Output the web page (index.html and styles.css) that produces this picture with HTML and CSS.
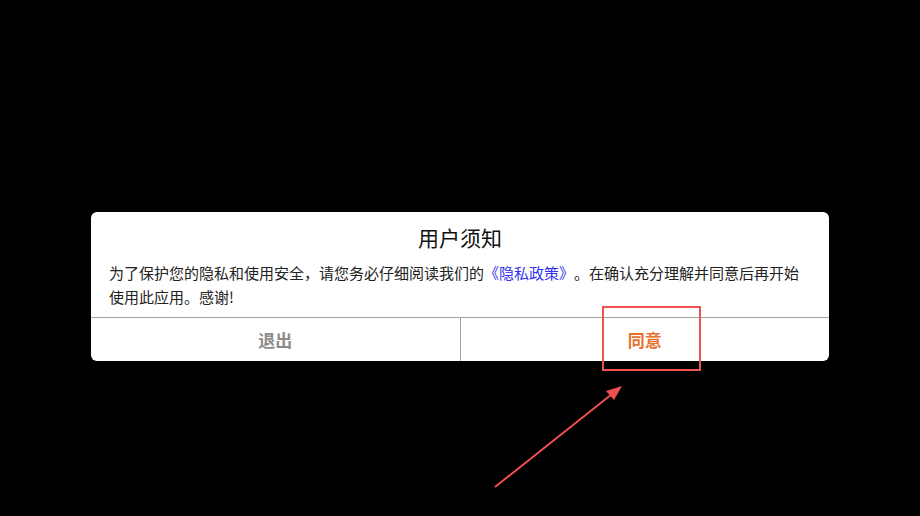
FILE: index.html
```html
<!DOCTYPE html>
<html lang="zh-CN">
<head>
    <meta charset="UTF-8">
    <meta name="viewport" content="width=device-width, initial-scale=1.0">
    <title>用户须知</title>
    <link rel="stylesheet" href="styles.css">
</head>
<body>
    <div class="screen">
        <div class="dialog">
            <h2 class="dialog-title">用户须知</h2>
            <p class="dialog-text">为了保护您的隐私和使用安全，请您务必仔细阅读我们的<a href="#" class="policy">《隐私政策》</a>。在确认充分理解并同意后再开始使用此应用。感谢!</p>
            <div class="dialog-actions">
                <button type="button" class="btn btn-quit">退出</button>
                <button type="button" class="btn btn-agree">同意</button>
            </div>
        </div>

        <!-- red annotation drawn over the screenshot -->
        <svg class="mark" width="920" height="516" viewBox="0 0 920 516">
            <rect x="603" y="307" width="97" height="63" fill="none" stroke="#f0504e" stroke-width="2"/>
            <line x1="495" y1="487" x2="612" y2="394" stroke="#f0504e" stroke-width="2"/>
            <polygon points="622,386 606,391 614,400" fill="#f0504e"/>
        </svg>
    </div>
</body>
</html>
```

FILE: styles.css
```css
body {
    margin: 0;
    background-color: #000;
    font-family: "Noto Sans CJK SC", "Noto Sans", sans-serif;
}

.screen {
    position: relative;
    width: 920px;
    height: 516px;
    overflow: hidden;
    padding-top: 212px;
    box-sizing: border-box;
}

.dialog {
    width: 738px;
    margin-left: 91px;
    background-color: #fff;
    border-radius: 6px;
    overflow: hidden;
}

.dialog-title {
    margin: 0;
    padding-top: 13px;
    font-size: 21px;
    font-weight: normal;
    line-height: 24px;
    text-align: center;
    color: #111;
}

.dialog-text {
    margin: 12px 0 0;
    padding: 0 18px 8px;
    font-size: 15px;
    line-height: 24px;
    color: #222;
    text-spacing-trim: space-all;
}

.policy {
    color: #2f2ff0;
    text-decoration: none;
}

.dialog-actions {
    display: flex;
    border-top: 1px solid #a3a3a3;
}

.btn {
    flex: 1;
    height: 43px;
    border: none;
    background: none;
    font-family: inherit;
    font-size: 17px;
    font-weight: bold;
}

.btn-quit {
    color: #8c8c8c;
    border-right: 1px solid #a3a3a3;
}

.btn-agree {
    color: #e8712c;
}

.mark {
    position: absolute;
    left: 0;
    top: 0;
}
```
